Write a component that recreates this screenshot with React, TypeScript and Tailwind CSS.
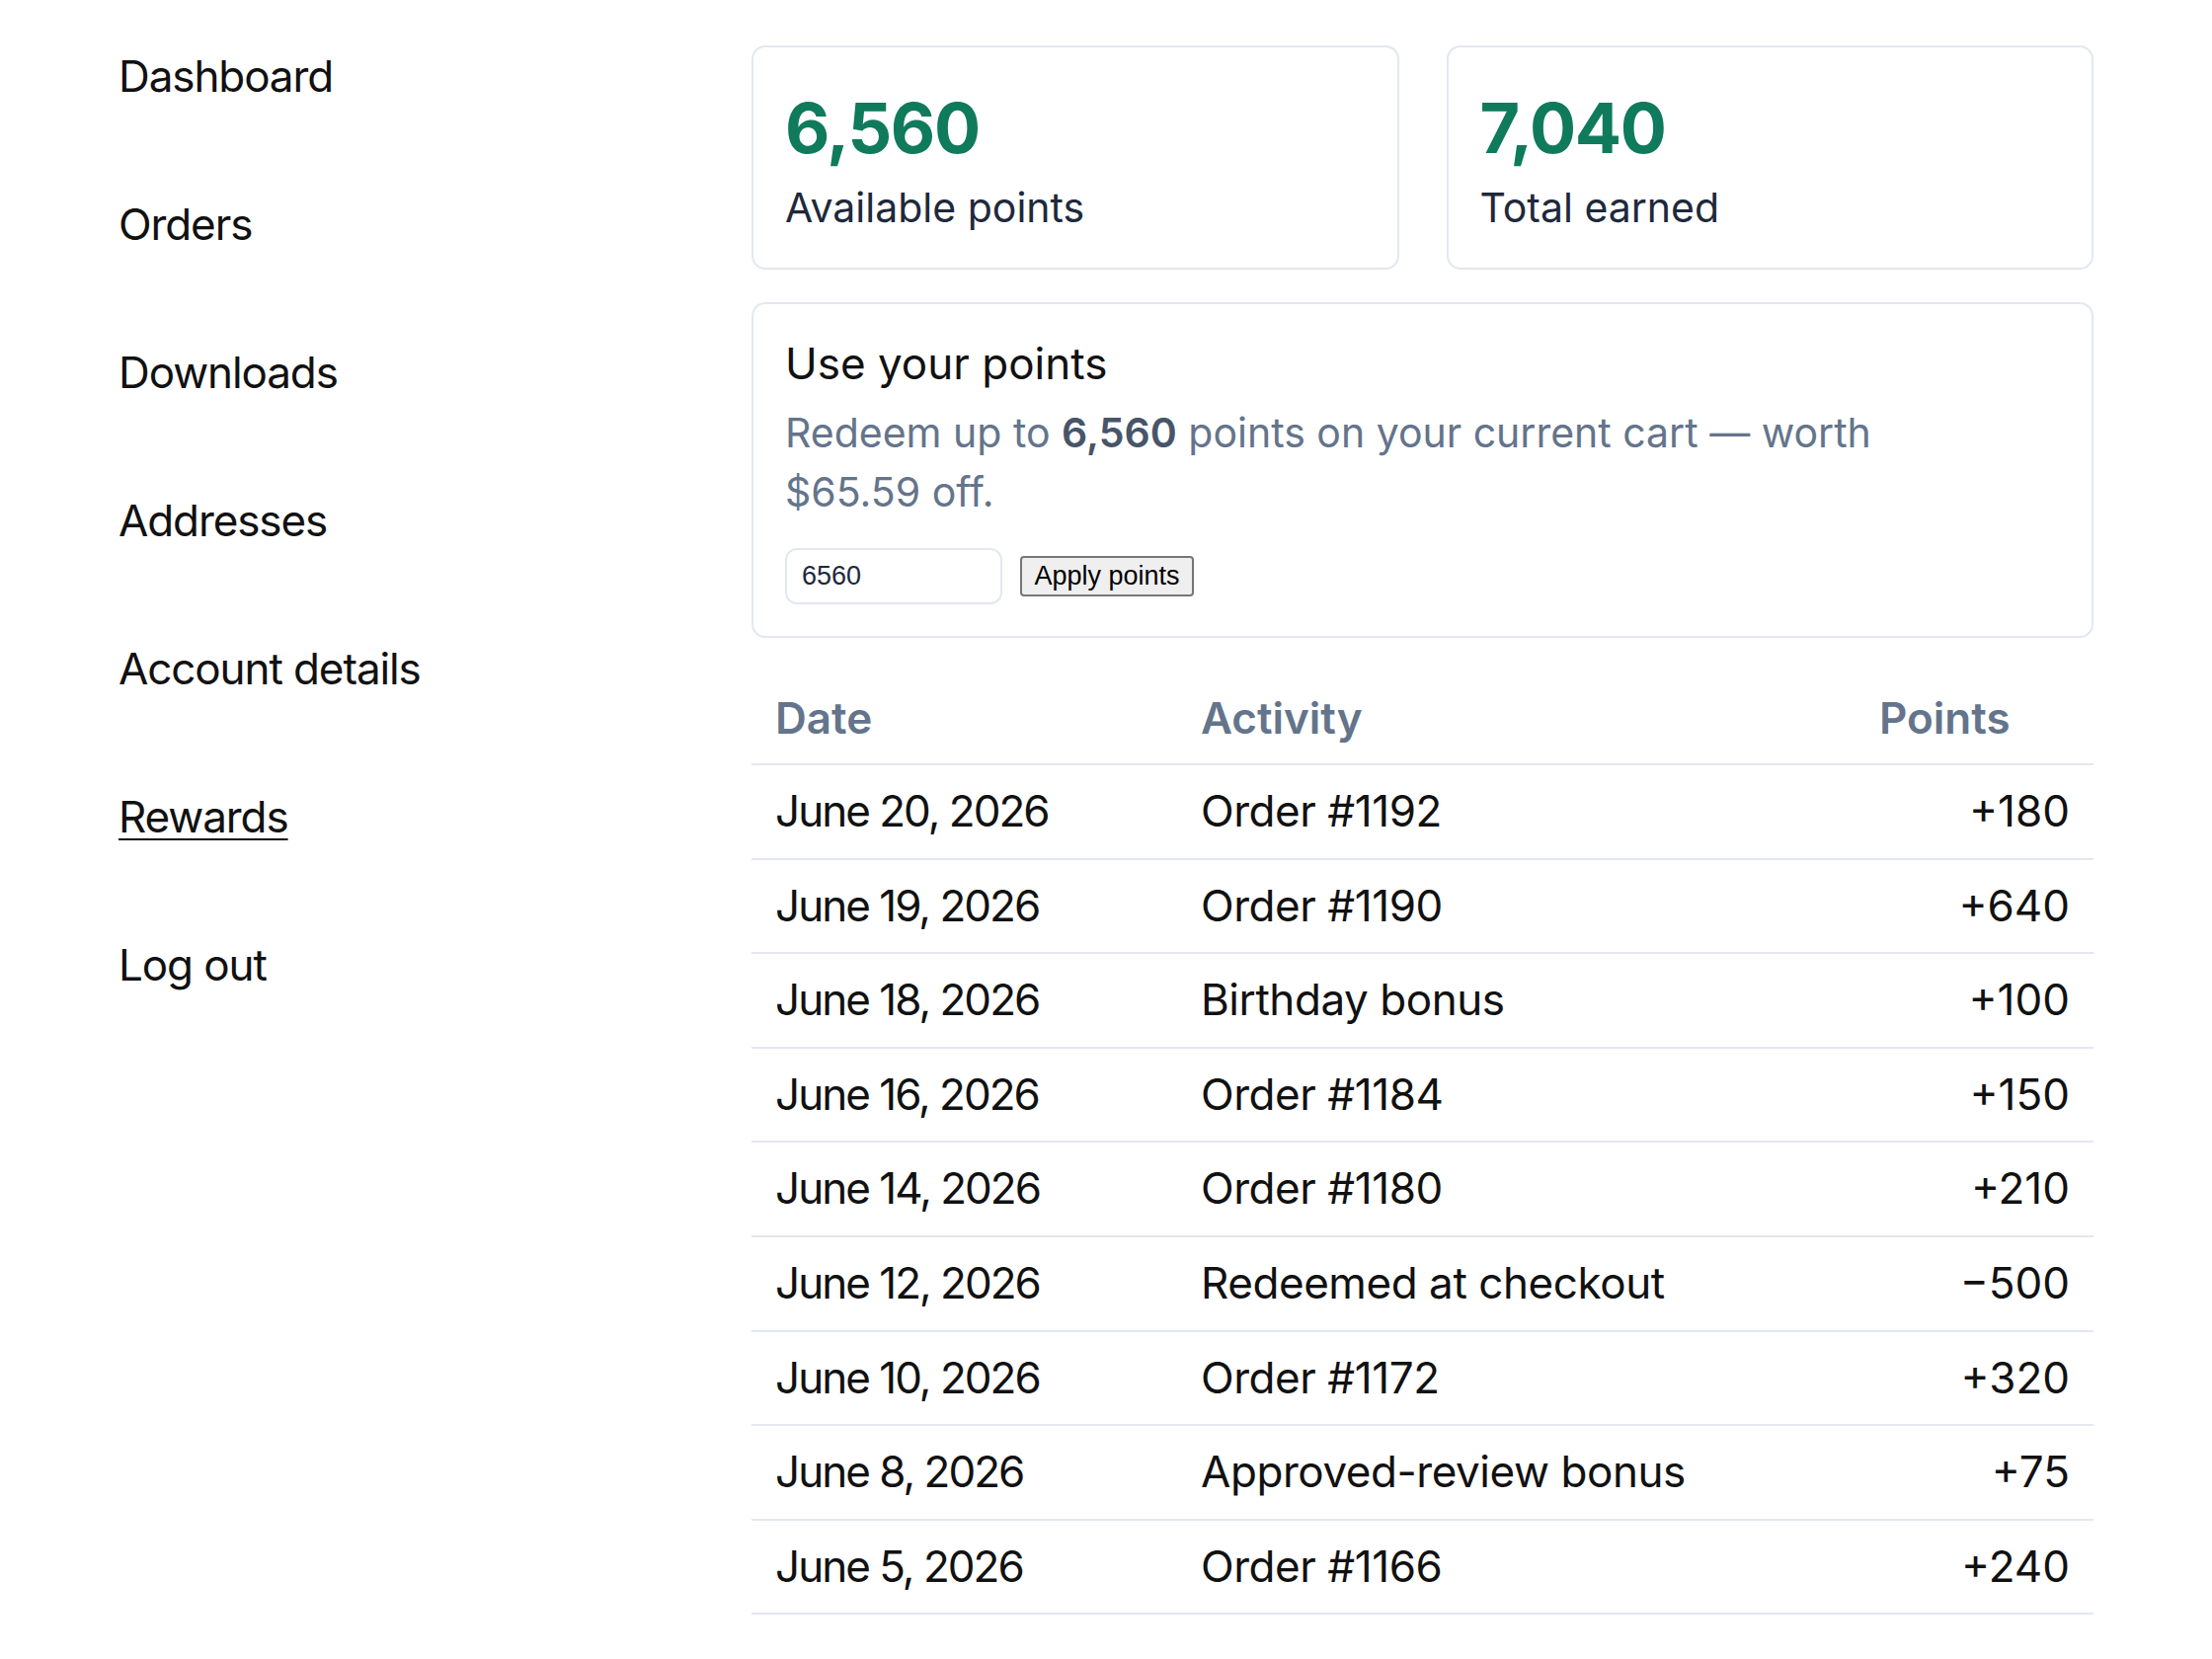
import React from 'react';

const navItems = [
  { label: 'Dashboard' },
  { label: 'Orders' },
  { label: 'Downloads' },
  { label: 'Addresses' },
  { label: 'Account details' },
  { label: 'Rewards', active: true },
  { label: 'Log out' },
];

const history = [
  { date: 'June 20, 2026', activity: 'Order #1192', points: '+180' },
  { date: 'June 19, 2026', activity: 'Order #1190', points: '+640' },
  { date: 'June 18, 2026', activity: 'Birthday bonus', points: '+100' },
  { date: 'June 16, 2026', activity: 'Order #1184', points: '+150' },
  { date: 'June 14, 2026', activity: 'Order #1180', points: '+210' },
  { date: 'June 12, 2026', activity: 'Redeemed at checkout', points: '\u2212500' },
  { date: 'June 10, 2026', activity: 'Order #1172', points: '+320' },
  { date: 'June 8, 2026', activity: 'Approved-review bonus', points: '+75' },
  { date: 'June 5, 2026', activity: 'Order #1166', points: '+240' },
];

function StatCard({ value, label }: { value: string; label: string }) {
  return (
    <div className="flex-1 rounded-[14px] border-2 border-[#e2e8f0] px-[32px] pt-[40px] pb-[31px]">
      <div className="text-[70px] font-bold leading-[84px] tracking-[-0.02em] text-[#0f7a5c]">{value}</div>
      <div className="mt-[8px] text-[41px] leading-[60px] text-[#1e293b]">{label}</div>
    </div>
  );
}

export default function App() {
  return (
    <div className="min-h-screen bg-white text-[#111111]" style={{ fontFamily: 'Inter, "Noto Sans", sans-serif' }}>
      <div className="flex items-start px-[120px] pt-[46px] pb-[40px]">

        {/* ── Account navigation ─────────────────────────────── */}
        <nav className="w-[641px] shrink-0">
          <ul className="mt-px flex flex-col gap-[90px]">
            {navItems.map((item) => (
              <li key={item.label}>
                <a
                  href="#"
                  className={`text-[44px] leading-[60px] tracking-[-0.025em] ${item.active ? 'underline decoration-2 underline-offset-[6px]' : ''}`}
                >
                  {item.label}
                </a>
              </li>
            ))}
          </ul>
        </nav>

        {/* ── Rewards content ────────────────────────────────── */}
        <main className="flex-1">
          <div className="flex gap-[48px]">
            <StatCard value="6,560" label="Available points" />
            <StatCard value="7,040" label="Total earned" />
          </div>

          <section className="mt-[33px] rounded-[14px] border-2 border-[#e2e8f0] px-[32px] pt-[32px] pb-[32px]">
            <h3 className="text-[44px] font-normal leading-[56px] text-[#111111]">Use your points</h3>
            <p className="mt-[12px] max-w-[1120px] text-[41px] leading-[60px] text-[#64748b]">
              Redeem up to <strong className="font-semibold text-[#475569]">6,560</strong> points on your current cart — worth $65.59 off.
            </p>
            <form className="mt-[27px] flex items-center gap-[18px]" onSubmit={(e) => e.preventDefault()}>
              <input
                type="number"
                defaultValue={6560}
                className="h-[57px] w-[220px] rounded-[12px] border-2 border-[#e2e8f0] px-[15px] text-[27px] text-[#1e293b] outline-none [appearance:textfield]"
                style={{ fontFamily: '"Liberation Sans", Arial, sans-serif' }}
              />
              <button
                type="submit"
                className="flex h-[41px] w-[176px] items-center justify-center rounded-[4px] border-2 border-[#767676] bg-[#efefef] text-[27px] text-black"
                style={{ fontFamily: '"Liberation Sans", Arial, sans-serif' }}
              >
                Apply points
              </button>
            </form>
          </section>

          <table className="mt-[35px] w-full table-fixed border-collapse">
            <colgroup>
              <col className="w-[431px]" />
              <col className="w-[687px]" />
              <col />
            </colgroup>
            <thead>
              <tr className="border-b-2 border-[#e2e8f0]">
                <th className="px-[24px] py-[16px] text-left text-[44px] font-semibold leading-[60px] text-[#64748b]">Date</th>
                <th className="px-[24px] py-[16px] text-left text-[44px] font-semibold leading-[60px] text-[#64748b]">Activity</th>
                <th className="px-[24px] py-[16px] text-left text-[44px] font-semibold leading-[60px] text-[#64748b]">Points</th>
              </tr>
            </thead>
            <tbody>
              {history.map((row) => (
                <tr key={row.date + row.activity} className="border-b-2 border-[#e2e8f0]">
                  <td className="px-[24px] py-[17px] text-[44px] leading-[59.6px] tracking-[-0.045em]">{row.date}</td>
                  <td className="px-[24px] py-[17px] text-[44px] leading-[59.6px] tracking-[-0.01em]">{row.activity}</td>
                  <td className="px-[24px] py-[17px] text-right text-[44px] leading-[59.6px]">{row.points}</td>
                </tr>
              ))}
            </tbody>
          </table>
        </main>
      </div>
    </div>
  );
}
